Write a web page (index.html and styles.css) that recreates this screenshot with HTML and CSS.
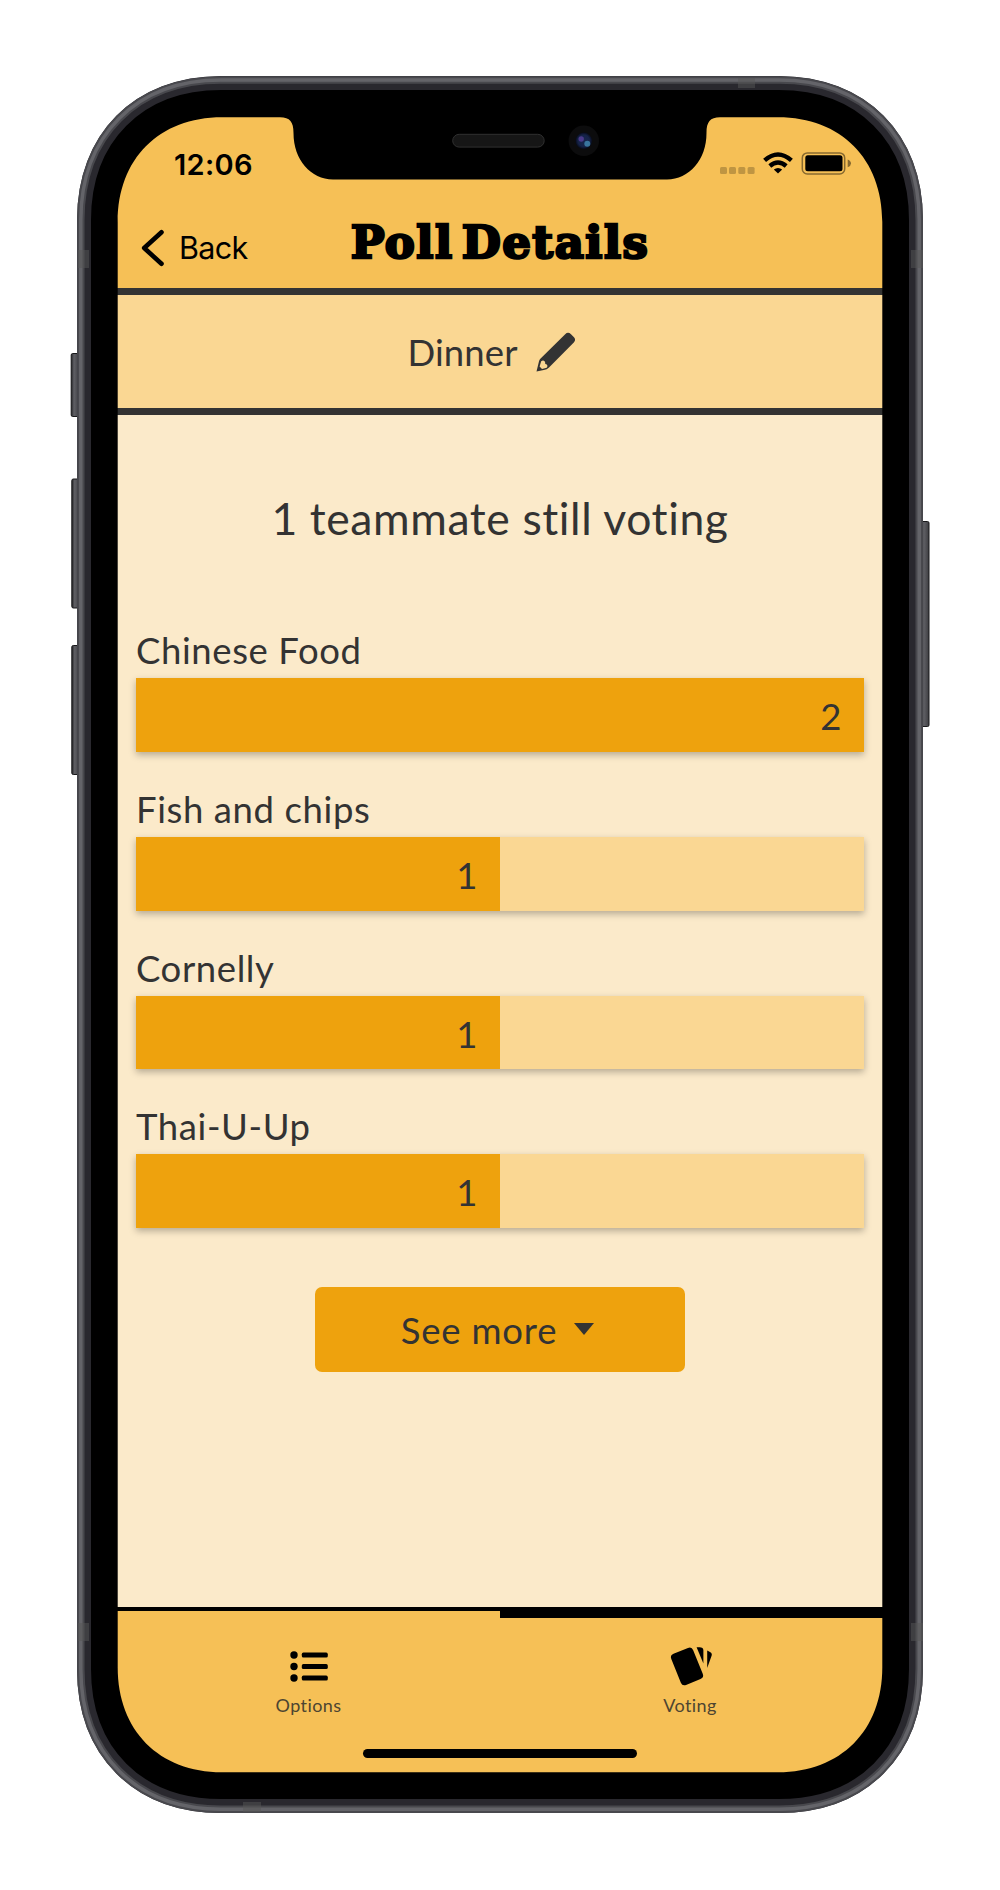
FILE: index.html
```html
<!DOCTYPE html>
<html lang="en">
<head>
<meta charset="utf-8">
<title>Poll Details</title>
<link rel="stylesheet" href="styles.css">
</head>
<body>
<div class="phone">
  <main class="screen">
    <header class="top">
      <div class="status">
        <span class="time">12:06</span>
        <svg class="status-icons" width="132" height="24" viewBox="0 0 132 24">
          <g opacity=".22"><rect x="0" y="15" width="7" height="7" rx="1.5"/><rect x="9" y="15" width="7" height="7" rx="1.5"/><rect x="18.3" y="15" width="7" height="7" rx="1.5"/><rect x="27.6" y="15" width="7" height="7" rx="1.5"/></g>
          <g fill="none" stroke="#000" stroke-width="4.4"><path d="M44.6 8.4Q58-3.4 71.4 8.4"/><path d="M49.8 14Q58 7 66.2 14"/></g>
          <path d="M53.8 17.6Q58 14.2 62.2 17.6L58 21.6Z"/>
          <rect x="82.3" y=".9" width="42.4" height="21" rx="5" fill="none" stroke="#000" stroke-opacity=".45" stroke-width="1.5"/>
          <rect x="85.3" y="3.2" width="37.2" height="16" rx="2.5"/>
          <path d="M127.7 7.5Q131 9 131 11.4T127.7 15.3Z" opacity=".45"/>
        </svg>
      </div>
      <div class="nav">
        <a class="back"><svg width="24" height="38" viewBox="0 0 24 38"><path d="M20.5 3.2 3.2 19l17.3 15.8" fill="none" stroke="#000" stroke-width="4.6" stroke-linecap="round" stroke-linejoin="round"/></svg><span>Back</span></a>
        <h1>Poll Details</h1>
      </div>
    </header>
    <section class="poll-name">
      <span>Dinner</span>
      <svg width="40" height="40" viewBox="0 0 40 40"><path fill="#333" fill-rule="evenodd" d="M29.2 2.2Q32-.5 35 2.2L38 5.2Q40.3 7.8 37.8 10.4L13 35.4Q11 37.4 7.8 38L.5 39.5 3 29.2Q3.4 27.8 4.6 26.6ZM5.2 29.2 3.6 34.4 6 37 10.7 35.7C12.5 33.4 10.5 31.8 9.2 32 9.6 29.7 7.8 27.4 5.2 29.2Z"/></svg>
    </section>
    <section class="results">
      <h2>1 teammate still voting</h2>
      <ul class="options">
        <li><span class="label">Chinese Food</span><div class="track"><div class="fill" style="width:100%">2</div></div></li>
        <li><span class="label">Fish and chips</span><div class="track"><div class="fill" style="width:50%">1</div></div></li>
        <li><span class="label">Cornelly</span><div class="track"><div class="fill" style="width:50%">1</div></div></li>
        <li><span class="label">Thai-U-Up</span><div class="track"><div class="fill" style="width:50%">1</div></div></li>
      </ul>
      <button class="more"><span>See more</span><svg width="20" height="12" viewBox="0 0 20 12"><path d="M0 0H20L10 12Z" fill="#333"/></svg></button>
    </section>
    <nav class="tabs">
      <a class="tab"><svg width="44" height="44" viewBox="0 0 44 44"><g><circle cx="7" cy="11" r="3.7"/><circle cx="7" cy="22.5" r="3.7"/><circle cx="7" cy="34" r="3.7"/><rect x="14.8" y="8.6" width="26" height="4.9" rx="1.6"/><rect x="14.8" y="20.1" width="26" height="4.9" rx="1.6"/><rect x="14.8" y="31.6" width="26" height="4.9" rx="1.6"/></g></svg><span>Options</span></a>
      <a class="tab active"><svg width="44" height="44" viewBox="0 0 44 44"><rect x="7.2" y="5.7" width="23.6" height="33.5" rx="4" transform="rotate(-22 19 22.4)"/><path d="M28.6 3.2H31.5Q35.4 3.2 35.4 6.5V19.5Z"/><path d="M39.2 6.6 42 8Q44.6 9.3 43.5 12L39.2 24Z"/></svg><span>Voting</span></a>
      <i class="home"></i>
    </nav>
  </main>

  <svg class="frame" width="1000" height="1890" viewBox="0 0 1000 1890">
    <defs>
      <linearGradient id="btn"><stop offset="0" stop-color="#222225"/><stop offset=".35" stop-color="#606065"/><stop offset="1" stop-color="#3d3d41"/></linearGradient>
      <radialGradient id="lens"><stop offset="0" stop-color="#18264e"/><stop offset=".7" stop-color="#152348"/><stop offset="1" stop-color="#070b1a"/></radialGradient>
    </defs>
    <g fill="url(#btn)" stroke="#18181a" stroke-width="1">
      <rect x="71.2" y="353.5" width="8" height="63" rx="1.5"/>
      <rect x="71.8" y="479" width="8" height="129" rx="1.5"/>
      <rect x="71.8" y="645.5" width="8" height="129" rx="1.5"/>
      <rect x="921" y="521.5" width="8" height="205" rx="1.5"/>
    </g>
    <path fill="#000" fill-rule="evenodd" d="M221 83H779C862 83 916 138 916 220V1669C916 1752 862 1806 779 1806H221C138 1806 84 1752 84 1669V220C84 138 138 83 221 83ZM220 117.3H280C290 117.3 293.5 122 293.5 133C293.5 160 311 179.4 333 179.4H667C689 179.4 706.5 160 706.5 133C706.5 122 710 117.3 720 117.3H778C841 117.3 882.3 159 882.3 222V1667.3C882.3 1730.3 841 1772.3 778 1772.3H222C159 1772.3 117.7 1730.3 117.7 1667.3V222C117.7 159 159 117.3 222 117.3Z"/>
    <g fill="none">
      <path stroke="#29282e" stroke-width="14" d="M221 83H779C862 83 916 138 916 220V1669C916 1752 862 1806 779 1806H221C138 1806 84 1752 84 1669V220C84 138 138 83 221 83Z"/>
      <path stroke="#48484d" stroke-width="7.5" d="M221 80H779C864 80 919.2 136 919.2 220V1669C919.2 1754 864 1809.2 779 1809.2H221C136 1809.2 80.8 1754 80.8 1669V220C80.8 136 136 80 221 80Z"/>
      <path stroke="#646469" stroke-width="3.5" d="M221 80H779C864 80 919.2 136 919.2 220V1669C919.2 1754 864 1809.2 779 1809.2H221C136 1809.2 80.8 1754 80.8 1669V220C80.8 136 136 80 221 80Z"/>
    </g>
    <g fill="#555" fill-opacity=".5">
      <rect x="738" y="78" width="17" height="10"/><rect x="243" y="1802" width="18" height="10"/>
      <rect x="78" y="250" width="11" height="18"/><rect x="911" y="250" width="12" height="18"/>
      <rect x="78" y="1623" width="11" height="18"/><rect x="911" y="1623" width="12" height="18"/>
    </g>
    <rect x="452.7" y="134.3" width="91.5" height="12.8" rx="6.4" fill="#161616" stroke="#303030"/>
    <circle cx="583.8" cy="140.8" r="15.2" fill="#0c0c0d"/>
    <circle cx="583.8" cy="140.8" r="8.3" fill="url(#lens)"/>
    <circle cx="581.2" cy="139" r="2.7" fill="#57409a" opacity=".8"/>
    <circle cx="587.3" cy="143.8" r="3" fill="#3f84ad" opacity=".85"/>
  </svg>
</div>
</body>
</html>
```
FILE: styles.css
```css
* { box-sizing: border-box; }
body { margin: 0; background: #fff; }
h1, h2, ul { margin: 0; padding: 0; font-weight: 400; }
svg { display: block; flex: none; }

.phone {
  position: relative;
  width: 1000px;
  height: 1890px;
  padding: 117px 117px 0;
}
.frame { position: absolute; inset: 0; pointer-events: none; }
.screen {
  display: flex;
  flex-direction: column;
  width: 766px;
  height: 1656px;
  overflow: hidden;
  border-radius: 90px;
  background: #fbeaca;
  color: #333;
  font-family: Lato, "Open Sans", sans-serif;
  font-size: 36.5px;
  letter-spacing: 0.6px;
  font-variant-ligatures: none;
}

.top {
  height: 178px;
  background: #f6c056;
  border-bottom: 7px solid #333;
  color: #000;
}
.status {
  display: flex;
  justify-content: space-between;
  height: 84px;
  padding: 35px 31px 0 57px;
  font: 600 29px/24px Inter, sans-serif;
  letter-spacing: 0.3px;
}
.time { padding-top: 1px; }
.nav { display: grid; grid-template-columns: 1fr 320px 1fr; height: 87px; }
.back {
  display: flex;
  align-items: center;
  gap: 14px;
  height: 38px;
  margin: 28px 0 0 24px;
  font: 400 30.5px/38px Inter, sans-serif;
  letter-spacing: -0.7px;
}
h1 {
  padding-top: 14px;
  font: 700 45px/56px "DejaVu Serif", serif;
  letter-spacing: 1.5px;
  word-spacing: -9px;
  text-align: center;
  white-space: nowrap;
  -webkit-text-stroke: 2.6px #000;
}

.poll-name {
  display: flex;
  align-items: center;
  justify-content: center;
  gap: 18px;
  height: 120px;
  padding-right: 17px;
  background: #fad793;
  border-bottom: 7px solid #333;
}
.poll-name span { letter-spacing: 0.1px; }

.results {
  flex: 1;
  display: flex;
  flex-direction: column;
  align-items: center;
  padding: 73px 19px 0;
}
h2 { font-size: 44.5px; line-height: 60px; letter-spacing: 0.6px; }
.options {
  display: flex;
  flex-direction: column;
  gap: 35px;
  width: 728px;
  margin-top: 80px;
  list-style: none;
}
.options li { height: 123.8px; }
.label { display: block; height: 50px; line-height: 45px; }
.track {
  height: 73.8px;
  background: #fad793;
  box-shadow: 0 3px 7px rgba(0, 0, 0, 0.28);
}
.fill {
  height: 100%;
  padding-right: 22px;
  background: #eea20d;
  line-height: 77px;
  text-align: right;
}
.more {
  display: flex;
  align-items: center;
  justify-content: center;
  gap: 17px;
  width: 370px;
  height: 85px;
  margin-top: 59px;
  padding: 0 5px 0 0;
  border: 0;
  border-radius: 7px;
  background: #eea20d;
  color: #333;
  font: inherit;
  letter-spacing: 0.8px;
}
.more svg { margin-top: -1px; }

.tabs {
  position: relative;
  display: grid;
  grid-template-columns: 1fr 1fr;
  height: 166.4px;
  background: #f6c056;
}
.tab {
  display: flex;
  flex-direction: column;
  align-items: center;
  border-top: 4px solid #000;
  padding-top: 33px;
  color: #4d4531;
  font-size: 18px;
  line-height: 26px;
  letter-spacing: 0.4px;
}
.tab span { padding-top: 4px; }
.tab.active { border-top-width: 11px; padding: 26px 3px 0 0; }
.home {
  position: absolute;
  left: 246px;
  bottom: 15px;
  width: 274px;
  height: 9px;
  border-radius: 5px;
  background: #000;
}
```
